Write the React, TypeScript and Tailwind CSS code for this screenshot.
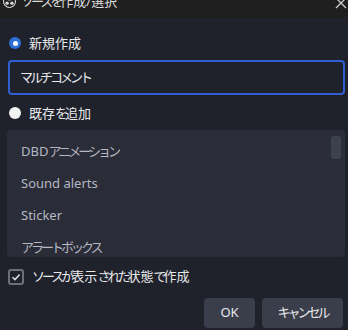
import React from 'react'

const items = ['DBDアニメーション', 'Sound alerts', 'Sticker', 'アラートボックス']

// kana in the reference font are proportional (narrower than the CJK font here)
const Jp = ({ text }: { text: string }) => {
  const parts = text.split(/([\u3040-\u30ff]+)/)
  return (
    <>
      {parts.map((p, i) =>
        /[\u3040-\u30ff]/.test(p) ? (
          <span key={i} className="tracking-[-3px]">
            {p}
          </span>
        ) : (
          <span key={i}>{p}</span>
        )
      )}
    </>
  )
}

const App = () => {
  return (
    <div
      className="w-[348px] h-[330px] overflow-hidden bg-[#1f212b] text-[#e8e9ec] flex flex-col"
      style={{ fontFamily: '"Noto Sans", "Noto Sans CJK JP", sans-serif' }}
    >
      {/* title bar, scrolled so its top is cut */}
      <div className="h-[18px] shrink-0 bg-[#1f1f1f] relative overflow-hidden">
        <div className="absolute left-[3px] top-[-5px] flex items-center gap-[5px]">
          <svg width="13" height="13" viewBox="0 0 24 24" className="shrink-0">
            <circle cx="12" cy="12" r="11" fill="none" stroke="#d8d8d8" strokeWidth="2" />
            <circle cx="12" cy="7" r="3.2" fill="#d8d8d8" />
            <circle cx="7.5" cy="15" r="3.2" fill="#d8d8d8" />
            <circle cx="16.5" cy="15" r="3.2" fill="#d8d8d8" />
          </svg>
          <span className="text-[13px] leading-none text-[#dcdcdc]">
            <Jp text="ソースを作成/選択" />
          </span>
        </div>
        <svg className="absolute right-[1px] top-[-3px]" width="12" height="12" viewBox="0 0 12 12">
          <path d="M1 1 L11 11 M11 1 L1 11" stroke="#d0d0d0" strokeWidth="1.3" />
        </svg>
      </div>

      <div className="flex flex-col px-[8px] pr-[3px]">
        {/* new */}
        <div className="flex items-center gap-[8px] mt-[18px] h-[14px] pl-[1px]">
          <span className="w-[12px] h-[12px] rounded-full bg-[#2c6fd6] flex items-center justify-center">
            <span className="w-[5px] h-[5px] rounded-full bg-white" />
          </span>
          <span className="text-[13px] leading-none">新規作成</span>
        </div>

        <div className="mt-[10px] h-[35px] border-2 border-[#2f5fd3] rounded-[4px] flex items-center px-[10px] text-[13px] bg-[#1f212b]">
          <Jp text="マルチコメント" />
        </div>

        <div className="flex items-center gap-[8px] mt-[11px] h-[14px] pl-[1px]">
          <span className="w-[12px] h-[12px] rounded-full bg-[#f2f2f2]" />
          <span className="text-[13px] leading-none">
            <Jp text="既存を追加" />
          </span>
        </div>

        {/* list */}
        <div className="mt-[10px] h-[127px] ml-[-1px] rounded-[4px] bg-[#2a2c38] relative overflow-hidden">
          <div className="flex flex-col pt-[6px] pl-[14px]">
            {items.map((t) => (
              <div key={t} className="h-[32px] flex items-center text-[13px] text-[#b5b8c2]">
                <Jp text={t} />
              </div>
            ))}
          </div>
          <div className="absolute right-[4px] top-[6px] w-[10px] h-[23px] rounded-[3px] bg-[#3d404d]" />
        </div>

        {/* checkbox */}
        <div className="flex items-center gap-[8px] mt-[11px] h-[17px]">
          <span className="w-[16px] h-[16px] rounded-[3px] border-2 border-[#6d707a] flex items-center justify-center">
            <svg width="10" height="10" viewBox="0 0 10 10">
              <path d="M1.5 5.2 L4 7.6 L8.6 2.4" fill="none" stroke="#dcdde0" strokeWidth="1.5" />
            </svg>
          </span>
          <span className="text-[13px] leading-none">
            <Jp text="ソースが表示された状態で作成" />
          </span>
        </div>

        <div className="flex justify-end gap-[7px] mt-[13px] pr-[2px]">
          <button className="w-[51px] h-[30px] rounded-[4px] bg-[#3a3d4a] text-[13px] text-[#e8e9ec]">OK</button>
          <button className="w-[81px] h-[30px] rounded-[4px] bg-[#3a3d4a] text-[13px] text-[#e8e9ec]">
            <Jp text="キャンセル" />
          </button>
        </div>
      </div>
    </div>
  )
}

export default App
